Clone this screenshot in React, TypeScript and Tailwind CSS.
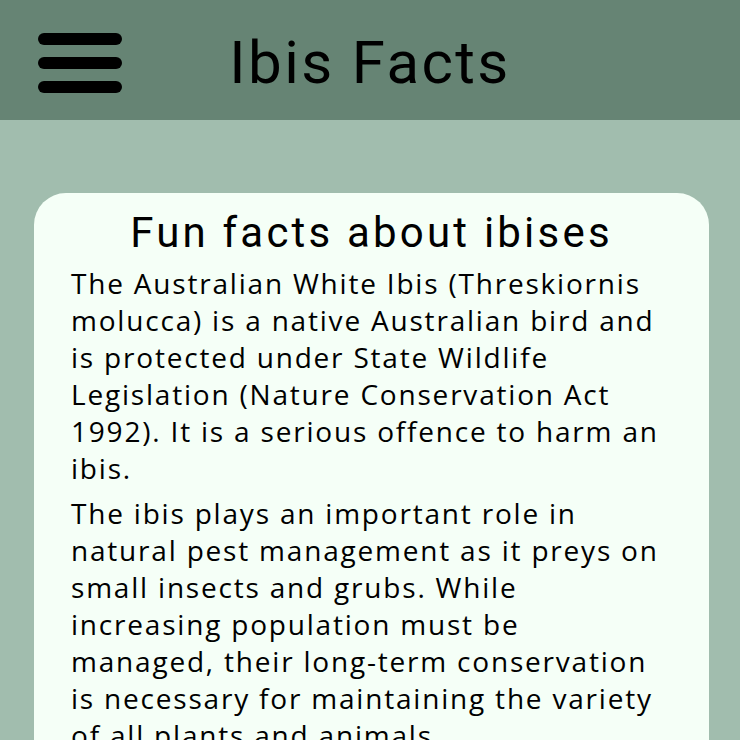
import React from 'react';

const FACTS = [
  'The Australian White Ibis (Threskiornis molucca) is a native Australian bird and is protected under State Wildlife Legislation (Nature Conservation Act 1992). It is a serious offence to harm an ibis.',
  'The ibis plays an important role in natural pest management as it preys on small insects and grubs. While increasing population must be managed, their long-term conservation is necessary for maintaining the variety of all plants and animals.',
];

const App: React.FC = () => {
  return (
    <div className="min-h-screen bg-[#a1bdae] font-['Roboto',_sans-serif] text-black">
      {/* Header */}
      <header className="grid h-[120px] grid-cols-[1fr_auto_1fr] items-center bg-[#668474] pt-[6px]">
        <button aria-label="Menu" className="ml-[38px] flex w-[84px] flex-col gap-[12px]">
          <span className="block h-[12px] w-full rounded-full bg-black" />
          <span className="block h-[12px] w-full rounded-full bg-black" />
          <span className="block h-[12px] w-full rounded-full bg-black" />
        </button>
        <h1 className="text-[60px] leading-none font-normal tracking-[2.4px]">Ibis Facts</h1>
        <div />
      </header>

      {/* Facts card */}
      <main className="ml-[34px] mr-[31px] mt-[73px] rounded-[32px] bg-[#f5fff7] px-[37px] pb-8 pt-[14px]">
        <h2 className="text-center text-[42px] leading-[52px] font-normal tracking-[3.2px]">
          Fun facts about ibises
        </h2>
        {FACTS.map((fact, i) => (
          <p
            key={i}
            className="mt-[8px] first-of-type:mt-[6px] font-['Open_Sans',_sans-serif] text-[28px] leading-[37px] tracking-[1.8px]"
          >
            {fact}
          </p>
        ))}
      </main>
    </div>
  );
};

export default App;
